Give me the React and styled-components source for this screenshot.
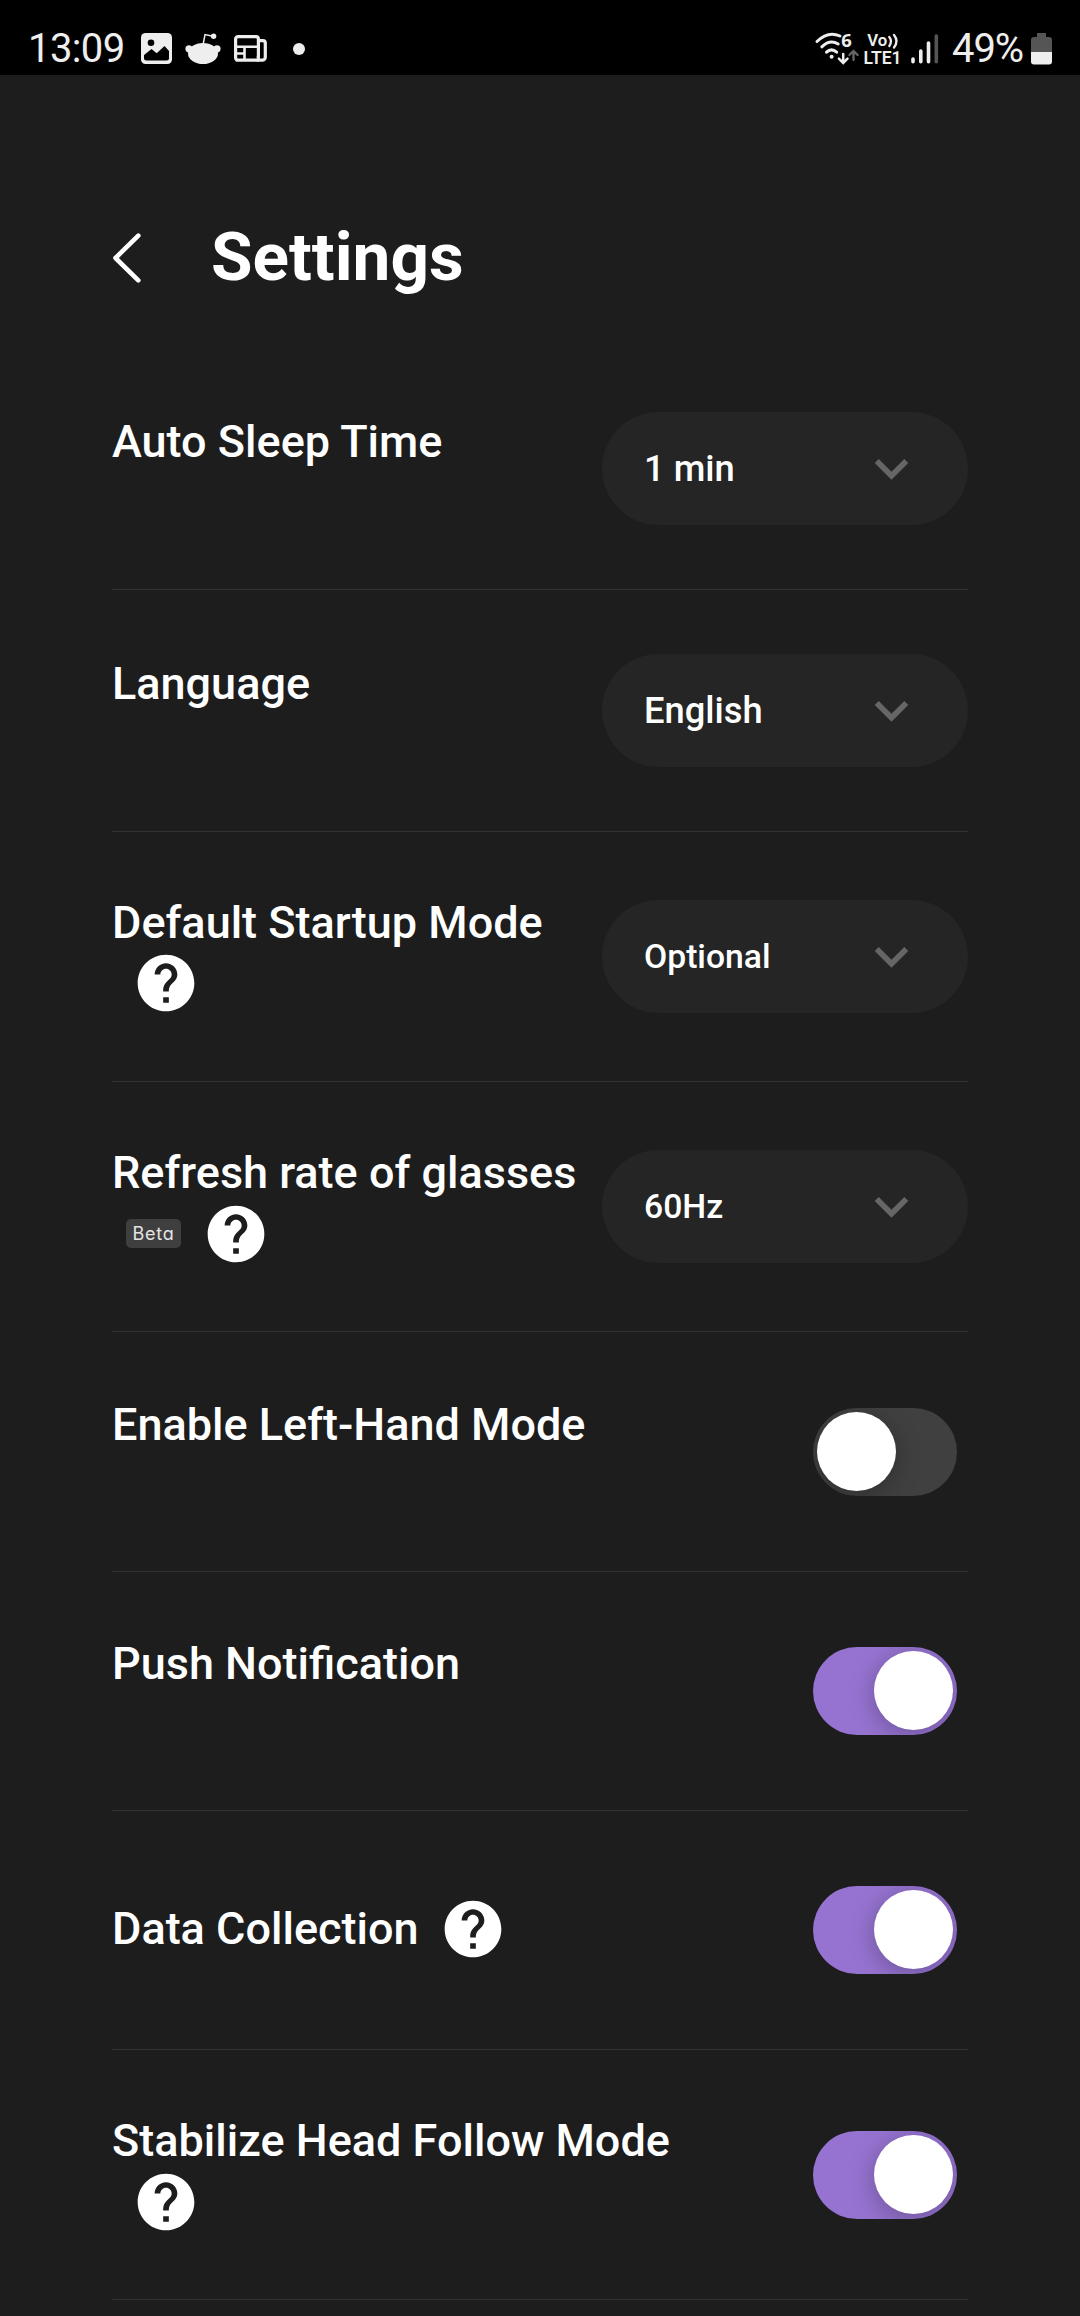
import React, {useState} from 'react';
import styled, {createGlobalStyle} from 'styled-components';
import {MdExpandMore, MdHelp} from 'react-icons/md';

const settings = [
    {label: 'Auto Sleep Time', value: '1 min', size: 36.3, height: 242.4},
    {label: 'Language', value: 'English', size: 36.3, height: 241.3},
    {label: 'Default Startup Mode', value: 'Optional', size: 33.7, help: true, height: 250.4},
    {label: 'Refresh rate of glasses', value: '60Hz', size: 33.7, beta: true, help: true, height: 250.4},
    {label: 'Enable Left-Hand Mode', on: false, height: 239.2},
    {label: 'Push Notification', on: true, height: 239.2},
    {label: 'Data Collection', on: true, help: true, inline: true, height: 239.2},
    {label: 'Stabilize Head Follow Mode', on: true, help: true, height: 250},
];

function StatusBar() {
    return (
        <Status>
            <Clock>13:09</Clock>
            <Notifications>
                <svg width="31" height="31" viewBox="0 0 31 31">
                    <rect width="31" height="31" rx="4.5" fill="#eee" />
                    <circle cx="10" cy="9.7" r="3.3" fill="#000" />
                    <path d="M3 22l7.5-6 5.2 4.3L23.5 13l4.5 5v7a2.5 2.5 0 0 1-2.5 2.5h-20A2.5 2.5 0 0 1 3 25z" fill="#000" />
                </svg>
                <svg width="36" height="31" viewBox="0 0 36 31">
                    <ellipse cx="18" cy="20.5" rx="15" ry="10.5" fill="#eee" />
                    <circle cx="4" cy="15.8" r="3.6" fill="#eee" />
                    <circle cx="32" cy="15.8" r="3.6" fill="#eee" />
                    <path d="M18.3 10.5L20 1.6l8 1.7" fill="none" stroke="#eee" strokeWidth="1.5" />
                    <circle cx="28.6" cy="3.2" r="2.7" fill="#eee" />
                </svg>
                <svg width="33" height="27" viewBox="0 0 33 27" fill="none" stroke="#eee" strokeWidth="3.2">
                    <path d="M24.4 25.2H4A2.4 2.4 0 0 1 1.6 22.8V4A2.4 2.4 0 0 1 4 1.6h18A2.4 2.4 0 0 1 24.4 4v18" />
                    <path d="M24.4 5.6h4.5A2.4 2.4 0 0 1 31.3 8v14.2a3 3 0 0 1-3 3h-4V21" />
                    <path d="M2 11.8h22M10.5 12v13M2 18.5h8" strokeWidth="2.6" />
                </svg>
                <Dot />
            </Notifications>
            <Network>
                <svg width="46" height="33" viewBox="0 0 46 33" fill="none" strokeLinecap="round">
                    <g stroke="#eee" strokeWidth="3">
                        <path d="M2 9.5Q13 -1.5 25 4" />
                        <path d="M6.8 14.8Q15 7 23.2 12" />
                        <path d="M11.5 20.2q5-4.8 10.2 0" />
                    </g>
                    <circle cx="16.6" cy="24.8" r="2" fill="#eee" />
                    <path d="M28.2 22v8.7M23.9 26.7l4.3 4.3 4.3-4.3" stroke="#eee" strokeWidth="2.5" />
                    <path d="M38.5 28V19M34.4 23l4.1-4.1 4.1 4.1" stroke="#666" strokeWidth="2.3" />
                    <text x="26.3" y="14.8" fontSize="18.5" fontWeight="700" fontFamily="Noto Sans, sans-serif" fill="#eee">6</text>
                </svg>
                <svg width="38" height="33" viewBox="0 0 38 33" fontFamily="Roboto, sans-serif" fontWeight="600" fill="#eee">
                    <text x="3.2" y="14.3" fontSize="17" textLength="20" lengthAdjust="spacingAndGlyphs">Vo</text>
                    <path d="M25.3 5q3.3 4.3 0 9M30 3q5 6 0 12.5" fill="none" stroke="#eee" strokeWidth="2.3" strokeLinecap="round" />
                    <text x="-0.5" y="31.8" fontSize="17.5" textLength="38" lengthAdjust="spacingAndGlyphs">LTE1</text>
                </svg>
                <svg width="28" height="30" viewBox="0 0 28 30" strokeWidth="3.6" strokeLinecap="round" stroke="#eee">
                    <path d="M2 25v2.8M9.8 17v10.8M17.5 9v18.8" />
                    <path d="M25.3 2v25.8" stroke="#555" />
                </svg>
            </Network>
            <Percent>49%</Percent>
            <svg width="21" height="32" viewBox="0 0 21 32">
                <path d="M6 0h9v4h3a3 3 0 0 1 3 3v12H0V7a3 3 0 0 1 3-3h3z" fill="#555" />
                <path d="M0 19h21v9.5a3 3 0 0 1-3 3H3a3 3 0 0 1-3-3z" fill="#eee" />
            </svg>
        </Status>
    )
}

function Setting({item}) {

    const [on, setOn] = useState(item.on);

    return (
        <Row $height={item.height}>
            <Label $inline={item.inline}>
                <Name>{item.label}</Name>
                {
                    (item.help || item.beta) && (
                        <Extras>
                            {item.beta && <Beta>Beta</Beta>}
                            {item.help && <HelpIcon />}
                        </Extras>
                    )
                }
            </Label>
            {
                item.value
                    ? <Select $size={item.size}>{item.value}<Arrow /></Select>
                    : <Toggle $on={on} onClick={() => setOn(!on)}><Knob /></Toggle>
            }
        </Row>
    )
}

function App() {
    return (
        <Page>
            <GlobalStyle />
            <StatusBar />
            <Header>
                <svg width="30" height="52" viewBox="0 0 30 52" fill="none" stroke="#fff" strokeWidth="4.6" strokeLinecap="round" strokeLinejoin="round">
                    <path d="M26.3 3.7L3.5 26l22.8 22.3" />
                </svg>
                <Title>Settings</Title>
            </Header>
            <List>
                {
                    settings.map((item, i) => (
                        <Setting item={item} key={i} />
                    ))
                }
            </List>
        </Page>
    )
}

export default App

const GlobalStyle = createGlobalStyle`
    * {
        box-sizing: border-box;
    }
    body {
        margin: 0;
        background-color: #1d1d1d;
    }
`

const Page = styled.div`
    width: 1080px;
    height: 2316px;
    overflow: hidden;
    background-color: #1d1d1d;
    color: #fff;
    font-family: Roboto, sans-serif;

    svg {
        display: block;
        flex-shrink: 0;
        overflow: visible;
    }
`

const Status = styled.div`
    height: 75px;
    padding: 22px 28px 0 28px;
    display: flex;
    align-items: center;
    background-color: #000;
    color: #eee;
    font-size: 40px;
`

const Clock = styled.div`
    width: 113px;
    letter-spacing: -0.6px;
`

const Notifications = styled.div`
    display: flex;
    align-items: center;
    gap: 13px;
    flex: 1;
`

const Dot = styled.div`
    width: 12px;
    height: 12px;
    margin-left: 13px;
    border-radius: 50%;
    background-color: #eee;
`

const Network = styled.div`
    display: flex;
    align-items: center;
    gap: 3px;

    svg:last-child {
        margin-left: 6px;
    }
`

const Percent = styled.div`
    width: 79px;
    margin-left: 13px;
    letter-spacing: -1.1px;
`

const Header = styled.div`
    height: 273px;
    padding: 94px 0 0 112px;
    display: flex;
    align-items: flex-start;

    svg {
        margin-top: 63px;
    }
`

const Title = styled.h1`
    margin: 48px 0 0 69px;
    font-size: 67.5px;
    font-weight: 700;
    line-height: 80px;
`

const List = styled.div`
    padding: 0 112px;
`

const Row = styled.div`
    height: ${props => props.$height}px;
    display: flex;
    align-items: center;
    justify-content: space-between;
    border-bottom: 1px solid #333;
`

const Label = styled.div`
    display: flex;
    flex-direction: ${props => props.$inline ? 'row' : 'column'};
    align-items: ${props => props.$inline ? 'center' : 'flex-start'};
    min-height: 108px;
    padding-bottom: ${props => props.$inline ? '1px' : '0'};
`

const Name = styled.div`
    font-size: 45px;
    font-weight: 500;
    line-height: 54px;
    white-space: nowrap;
`

const Extras = styled.div`
    height: 67px;
    display: flex;
    align-items: center;
`

const Beta = styled.span`
    width: 55px;
    height: 29px;
    margin-left: 14px;
    margin-right: 1px;
    border-radius: 5px;
    background-color: #3f3f3f;
    color: #e4e4e4;
    font-family: Inter, sans-serif;
    font-size: 18px;
    font-feature-settings: 'cv11';
    letter-spacing: 0.7px;
    line-height: 29px;
    text-align: center;
`

const HelpIcon = styled(MdHelp)`
    width: 68px;
    height: 68px;
    margin-left: 20px;
`

const Select = styled.div`
    width: 366px;
    height: 113px;
    padding: 0 43px 0 42px;
    display: flex;
    align-items: center;
    justify-content: space-between;
    border-radius: 57px;
    background-color: #252525;
    font-size: ${props => props.$size}px;
    font-weight: 500;
`

const Arrow = styled(MdExpandMore)`
    width: 67px;
    height: 67px;
    color: #666;
`

const Toggle = styled.div`
    width: 144px;
    height: 88px;
    margin-right: 11px;
    padding: 4px;
    display: flex;
    justify-content: ${props => props.$on ? 'flex-end' : 'flex-start'};
    border-radius: 44px;
    overflow: hidden;
    background-color: ${props => props.$on ? '#9673d1' : '#404040'};
    cursor: pointer;
`

const Knob = styled.div`
    width: 79px;
    height: 79px;
    border-radius: 50%;
    background-color: #fff;
    box-shadow: 0 5px 26px rgba(0, 0, 0, 0.28);
`
